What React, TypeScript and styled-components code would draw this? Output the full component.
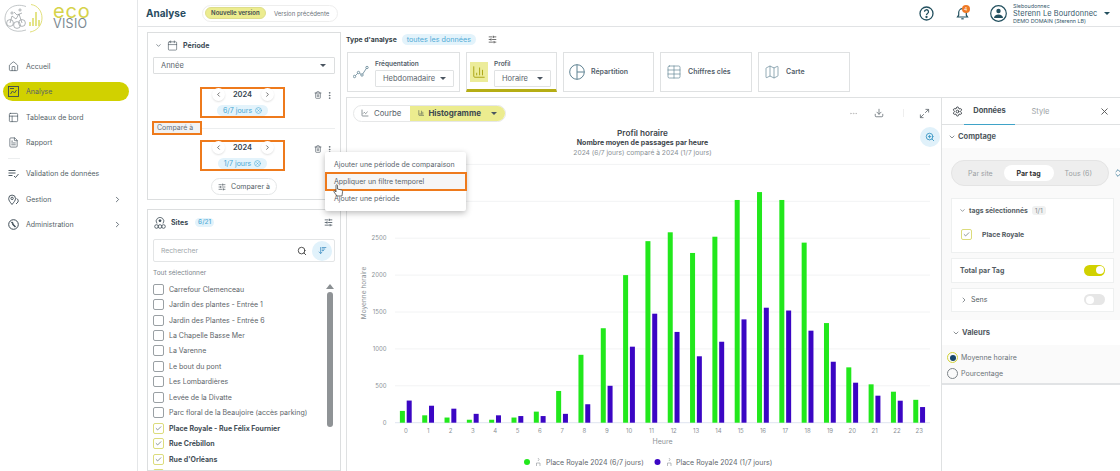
import React from "react";
import styled, { createGlobalStyle } from "styled-components";
import {
  Home, PanelsTopLeft, FileText, ChevronRight, ChevronLeft, ChevronDown,
  Trash2, EllipsisVertical, CircleX, SlidersHorizontal, Search, ArrowDownWideNarrow,
  Check, ChartLine, ChartColumn, Ellipsis, Download, Maximize2, Settings, X, ChevronsUpDown, Table, Map as MapIcon, ZoomIn, Calendar,
} from "lucide-react";

const Global = createGlobalStyle`
  html, body { margin: 0; padding: 0; background: #fff; overflow: hidden; }
  body { font-family: "Inter", "Noto Sans", sans-serif; color: #4a5560; }
  #root { width: 1120px; height: 471px; }
  * { box-sizing: border-box; }
`;

const Page = styled.div`
  display: flex; width: 1120px; height: 471px; overflow: hidden;
`;
const Sidebar = styled.aside`
  width: 138px; flex: none; border-right: 1px solid #e4e6e8; display: flex; flex-direction: column; padding: 3px 0 0 3px;
`;
const Logo = styled.div`
  display: flex; align-items: center; height: 31px; gap: 5px; margin-bottom: 22.5px; margin-left: -1px;
`;
const LogoWords = styled.div`
  display: flex; flex-direction: column; margin-top: -4px;
`;
const LogoEco = styled.span`
  color: #d6d34a; font-size: 20px; letter-spacing: .8px; line-height: 13px; font-weight: 400;
`;
const LogoVisio = styled.span`
  color: #7d8a92; font-size: 12.5px; letter-spacing: .3px; line-height: 11px;
`;
const NavItem = styled.div<{ $active?: boolean; $mb?: number }>`
  display: flex; align-items: center; width: 126px; height: 19px; padding: 0 7px 0 5px; gap: 7px; border-radius: 10px;
  font-size: 7px; color: #555f68; margin-bottom: ${p => p.$mb ?? 6.5}px;
  background: ${p => (p.$active ? "#d1d100" : "transparent")};
  svg { flex: none; color: #3c4a54; }
  span { flex: 1; }
`;
const NavDivider = styled.div`
  width: 12px; height: 1px; background: #eceeef; margin: 0 0 5.5px 5px;
`;
const Main = styled.div`
  flex: 1; min-width: 0; display: flex; flex-direction: column;
`;
const Header = styled.header`
  height: 27px; flex: none; border-bottom: 1px solid #e1e3e5; display: flex; align-items: center; padding: 0 0 0 8px;
`;
const Title = styled.h1`
  margin: 0 16px 0 0; font-size: 10px; font-weight: 700; color: #274b60;
`;
const VersionSwitch = styled.div`
  display: flex; align-items: center; height: 17px; width: 136px; border: 1px solid #eeeeee; border-radius: 9px; padding: 0 1px 0 2px;
`;
const VersionOn = styled.span`
  background: #ecec8f; border: 1px solid #dede8a; border-radius: 6px; width: 61px; text-align: center; font-size: 6px; font-weight: 600; color: #3d4a50; line-height: 10px;
`;
const VersionOff = styled.span`
  padding: 0 0 0 8px; font-size: 6px; color: #6d757b; white-space: nowrap;
`;
const HeaderRight = styled.div`
  margin-left: auto; display: flex; align-items: center; color: #23505f;
`;
const BellWrap = styled.div`
  position: relative; margin: 0 21px 0 22px; display: flex;
`;
const BellDot = styled.i`
  position: absolute; right: -1px; top: -2px; width: 8px; height: 8px; border-radius: 50%; background: #ef7a26; color: #fff; font-style: normal; font-size: 5px; line-height: 8px; text-align: center;
`;
const User = styled.div`
  display: flex; flex-direction: column; margin-left: 6.5px; width: 91px; color: #35586b;
`;
const UserSmall = styled.span`
  font-size: 5.4px; line-height: 6px; white-space: nowrap;
`;
const UserName = styled.span`
  font-size: 7.4px; line-height: 9px; letter-spacing: .1px; white-space: nowrap;
`;
const Caret = styled.i<{ $c?: string }>`
  display: inline-block; width: 0; height: 0; flex: none; border-left: 3px solid transparent; border-right: 3px solid transparent; border-top: 3px solid ${p => p.$c || "#4a5560"};
`;
const HeaderCaret = styled.div`
  width: 16px; display: flex;
`;
const Body = styled.div`
  flex: 1; min-height: 0; display: flex;
`;
const LeftCol = styled.div`
  width: 208px; flex: none; display: flex; flex-direction: column; gap: 9px; padding: 5px 0 0 9px; overflow: hidden;
`;
const Panel = styled.section`
  width: 194px; border: 1px solid #dcdedf; flex: none;
`;
const PeriodPanel = styled(Panel)`
  height: 168px; padding: 5px 5px 0 5px; display: flex; flex-direction: column;
`;
const SectionHead = styled.div`
  display: flex; align-items: center; gap: 5px; height: 14px; padding-left: 2px; font-size: 7px; font-weight: 700; color: #3c4a54;
`;
const Select = styled.div`
  display: flex; align-items: center; justify-content: space-between; height: 17px; border: 1px solid #dcdedf; border-radius: 1px; margin-top: 5px; padding: 0 8px 0 7px; font-size: 7.5px; color: #59636b;
`;
const PeriodRow = styled.div`
  position: relative; display: flex; justify-content: center; padding-right: 3px;
`;
const PeriodBox = styled.div<{ $mt: number }>`
  width: 85px; height: 31px; margin-top: ${p => p.$mt}px; border: 2px solid #ee7a1c; display: flex; flex-direction: column; align-items: center;
`;
const YearRow = styled.div`
  display: flex; align-items: center; justify-content: center; gap: 7px; font-size: 7.5px; font-weight: 600; color: #374550; height: 11px;
`;
const RoundBtn = styled.span`
  width: 13px; height: 13px; border-radius: 50%; background: #fff; box-shadow: 0 1px 2px rgba(0,0,0,.12); display: flex; align-items: center; justify-content: center; color: #444;
`;
const YearLabel = styled.span`
  width: 22px; text-align: center;
`;
const DaysChip = styled.div`
  margin-top: 4.5px; background: #e3f3fb; color: #46a7d4; border-radius: 6px; font-size: 7px; padding: 0 6px; height: 11px; display: flex; align-items: center; gap: 3px; white-space: nowrap;
`;
const PeriodActions = styled.div<{ $top: number }>`
  position: absolute; right: 1px; top: ${p => p.$top}px; display: flex; align-items: center; gap: 3px; color: #555f68;
`;
const CompareLine = styled.div`
  position: relative; height: 14px; margin-top: 3px; display: flex; align-items: center;
  &::before { content: ""; position: absolute; left: 0; right: 0; top: 7px; height: 1px; background: #eceeef; }
`;
const CompareTag = styled.span`
  position: relative; margin-left: -1px; border: 2px solid #ee7a1c; background: #f1f2f3; color: #65707a; font-size: 7px; padding-left: 3px; height: 14px; line-height: 10px; width: 50px; white-space: nowrap;
`;
const CompareBtn = styled.div`
  align-self: center; margin-top: 7px; display: flex; align-items: center; justify-content: center; gap: 5px; height: 17px; width: 66px; border: 1px solid #e5e7e8; border-radius: 9px; font-size: 7px; color: #525c64; white-space: nowrap;
`;
const SitesPanel = styled(Panel)`
  height: 262px; padding: 4px 5px 0 5px; overflow: hidden;
`;
const SitesHead = styled.div`
  display: flex; align-items: center; height: 17px; font-size: 7px; font-weight: 700; color: #3c4a54; padding-left: 1px; gap: 5px;
`;
const Count = styled.span`
  background: #e3f3fb; color: #54aed8; font-size: 6.5px; font-weight: 500; border-radius: 5px; padding: 0 3px; line-height: 9px; margin-left: 2px;
`;
const HeadEnd = styled.div`
  margin-left: auto; display: flex; margin-right: 2px;
`;
const SearchBox = styled.div`
  height: 23px; margin-top: 8px; border: 1px solid #e3e5e6; border-radius: 2px; display: flex; align-items: center; padding: 0 2px 0 7px; font-size: 6.8px; color: #a0a6aa;
  span { flex: 1; }
`;
const SortBtn = styled.div`
  width: 20px; height: 20px; border-radius: 50%; background: #e1f2fb; color: #3c8cc0; display: flex; align-items: center; justify-content: center; margin-left: 5px;
`;
const SelectAll = styled.div`
  margin-top: 6px; font-size: 6.5px; color: #7d858b; height: 10px; line-height: 10px;
`;
const ListWrap = styled.div`
  display: flex; position: relative; margin-top: 5.5px;
`;
const List = styled.div`
  flex: 1; display: flex; flex-direction: column; gap: 4px;
`;
const SiteRow = styled.div<{ $on?: boolean }>`
  display: flex; align-items: center; gap: 5px; height: 11.45px; font-size: 7px; white-space: nowrap;
  font-weight: ${p => (p.$on ? 700 : 400)}; color: ${p => (p.$on ? "#454f57" : "#5c6469")};
`;
const Box = styled.span<{ $on?: boolean }>`
  width: 11px; height: 11px; flex: none; border-radius: 2px; border: 1px solid ${p => (p.$on ? "#dcdc7c" : "#9aa0a4")}; display: flex; align-items: center; justify-content: center; color: #3d4a50;
`;
const ScrollTrack = styled.div`
  position: absolute; right: 2px; top: 0; width: 6px; display: flex; flex-direction: column; align-items: center; gap: 3px;
`;
const ScrollUp = styled.i`
  flex: none; width: 0; height: 0; border-left: 4px solid transparent; border-right: 4px solid transparent; border-bottom: 5px solid #8a8f92;
`;
const ScrollThumb = styled.div`
  width: 6px; height: 135px; border-radius: 3px; background: #8f9396;
`;
const Center = styled.div`
  flex: 1; min-width: 0; display: flex; flex-direction: column; padding: 5px 0 0 0; position: relative;
`;
const TypeRow = styled.div`
  display: flex; align-items: center; height: 14px; font-size: 6.8px; font-weight: 700; color: #333d45;
`;
const TypeChip = styled.span`
  background: #e3f3fb; color: #4faad6; font-weight: 400; font-size: 7.2px; border-radius: 6px; padding: 0 5px; line-height: 11px; margin: 0 12px 0 5px;
`;
const Cards = styled.div`
  display: flex; gap: 6px; padding: 6px 0 0 1px; height: 51px; flex: none;
`;
const Card = styled.div<{ $w: number; $active?: boolean }>`
  width: ${p => p.$w}px; height: 40px; border: 1px solid #dfe1e2; display: flex; align-items: center; padding: 0 5px 1px; gap: 6px; font-size: 7px; font-weight: 600; color: #53606a; white-space: nowrap;
  ${p => (p.$active ? "border-bottom: 3px solid #b5ad14; padding-left: 3px; padding-top: 2px; padding-bottom: 0;" : "")}
  svg { flex: none; color: #5f8292; }
`;
const CardCol = styled.div`
  display: flex; flex-direction: column; gap: 2px; font-size: 6.5px; padding-top: 3px;
`;
const MiniSelect = styled.div<{ $w: number }>`
  width: ${p => p.$w}px; height: 17px; border: 1px solid #e0e2e3; border-radius: 1px; display: flex; align-items: center; justify-content: space-between; padding: 0 7px; font-size: 7.5px; font-weight: 400; color: #59636b;
`;
const ProfileIcon = styled.div`
  width: 19px; height: 20px; background: #ecec9a; display: flex; align-items: center; justify-content: center; svg { color: #a9a310; }
`;
const Split = styled.div`
  flex: 1; min-height: 0; display: flex; border-top: 1px solid #dfe1e2;
`;
const ChartArea = styled.div`
  width: 596px; flex: none; border-left: 1px solid #dfe1e2; border-right: 1px solid #dfe1e2; position: relative; display: flex; flex-direction: column;
`;
const ChartTop = styled.div`
  display: flex; align-items: center; height: 30px; padding: 0 11px 0 6px; flex: none; color: #666f76;
`;
const ChartTabs = styled.div`
  display: flex; height: 17px; border: 1px solid #e6e7e8; border-radius: 9px; overflow: hidden;
`;
const CurveTab = styled.div`
  display: flex; align-items: center; gap: 5px; width: 56px; padding-left: 7px; font-size: 7.8px; color: #59636b;
`;
const HistoTab = styled.div`
  display: flex; align-items: center; gap: 4px; width: 95px; padding: 0 8px; font-size: 8px; font-weight: 700; color: #3e4a50; background: #ecec8f;
`;
const TopEnd = styled.div`
  margin-left: auto; display: flex; align-items: center; gap: 16px;
  svg { color: #6e767c; }
`;
const TopDivider = styled.span`
  width: 1px; height: 8px; background: #eeeeee; margin: 0 -1px 0 3px;
`;
const ChartTitles = styled.div`
  text-align: center; flex: none; padding-right: 3px;
`;
const ChartH = styled.div`
  font-size: 8.2px; font-weight: 600; color: #3e464c; line-height: 10px;
`;
const ChartS = styled.div`
  font-size: 7px; font-weight: 700; color: #3e464c; line-height: 9px;
`;
const ChartP = styled.div`
  font-size: 6.7px; color: #8a9196; line-height: 12px;
`;
const ZoomBtn = styled.div`
  position: absolute; right: 1px; top: 29px; width: 20px; height: 20px; border-radius: 50%; background: #e0f1fa; display: flex; align-items: center; justify-content: center; color: #3c97c4;
`;
const ChartSvg = styled.svg`
  position: absolute; left: 0; top: 0; pointer-events: none;
`;
const Right = styled.aside`
  flex: 1; min-width: 0; display: flex; flex-direction: column; overflow: hidden;
`;
const Tabs = styled.div`
  display: flex; align-items: center; height: 27px; border-bottom: 1px solid #dfe1e2; padding-left: 10px; flex: none; color: #3b4248;
`;
const Tab = styled.div<{ $on?: boolean }>`
  height: 27px; display: flex; align-items: center; justify-content: center; width: 51px; font-size: 7.5px; font-weight: ${p => (p.$on ? 700 : 400)}; color: ${p => (p.$on ? "#454d54" : "#9aa0a4")};
  border-bottom: ${p => (p.$on ? "1px solid #3fa3c8" : "0")}; margin-left: ${p => (p.$on ? 1 : 0)}px;
`;
const TabX = styled.div`
  margin-left: auto; margin-right: 10px; display: flex; color: #555;
`;
const Accordion = styled.div<{ $white?: boolean }>`
  display: flex; align-items: center; gap: 2px; height: ${p => (p.$white ? 25 : 23)}px; padding-left: ${p => (p.$white ? 10 : 6)}px; font-size: 7.5px; font-weight: 700; color: #51595f; flex: none;
`;
const Gray = styled.div`
  background: #fafafa; flex: none; padding: 12px 5px 8px 9px;
`;
const Segment = styled.div`
  display: flex; align-items: center; width: 158px; height: 26px; flex: none; border-radius: 13px; background: #eeeeee; border: 1px solid #e4e4e4; padding: 0 16px 0 16px; font-size: 7px; color: #9a9fa3;
  justify-content: space-between; white-space: nowrap;
`;
const SegmentOn = styled.span`
  background: #fff; border-radius: 8px; width: 50px; height: 16px; display: flex; align-items: center; justify-content: center; font-weight: 700; color: #333;
`;
const SegmentWrap = styled.div`
  display: flex; align-items: center; gap: 4px; color: #3f7c9a;
  svg { flex: none; }
`;
const WhiteCard = styled.div`
  background: #fff; border: 1px solid #eef0f0; width: 163px;
`;
const TagsCard = styled(WhiteCard)`
  height: 55px; margin-top: 12px; padding: 7px 7px;
`;
const TagsHead = styled.div`
  display: flex; align-items: center; gap: 3px; font-size: 6.8px; font-weight: 700; color: #555d63; height: 8px; white-space: nowrap;
`;
const Muted = styled.span`
  background: #f0f1f1; color: #8a9196; font-weight: 400; border-radius: 3px; padding: 0 3px; margin-left: 1px;
`;
const TagRow = styled.div`
  display: flex; align-items: center; gap: 10px; margin-top: 15px; margin-left: 2px; font-size: 6.8px; font-weight: 700; color: #50585e;
`;
const RowCard = styled(WhiteCard)<{ $h: number; $mt: number; $bold?: boolean }>`
  height: ${p => p.$h}px; margin-top: ${p => p.$mt}px; display: flex; align-items: center; padding: 0 8px 1px 8px; font-size: 7px; color: #555d63; font-weight: ${p => (p.$bold ? 700 : 400)};
  span { flex: 1; }
`;
const Toggle = styled.div<{ $on?: boolean }>`
  width: 21px; height: 11px; border-radius: 6px; background: ${p => (p.$on ? "#d1d100" : "#e6e6e6")}; position: relative;
  &::after { content: ""; position: absolute; top: 1.5px; width: 8px; height: 8px; border-radius: 50%; background: #fff; ${p => (p.$on ? "right: 1.5px;" : "left: 1.5px;")} }
`;
const Radios = styled.div`
  background: #fafafa; border-bottom: 2px solid #e1e3e5; padding: 7px 0 4px 5px; display: flex; flex-direction: column; gap: 5px;
`;
const Radio = styled.div`
  display: flex; align-items: center; gap: 3px; font-size: 7px; color: #6a7278;
`;
const RadioDot = styled.i<{ $on?: boolean }>`
  width: 11px; height: 11px; border-radius: 50%; border: 1px solid ${p => (p.$on ? "#d3d338" : "#7d8488")}; display: flex; align-items: center; justify-content: center;
  &::after { content: ""; width: 6px; height: 6px; border-radius: 50%; background: ${p => (p.$on ? "#17466b" : "transparent")}; }
`;
const Menu = styled.div`
  position: absolute; left: -21px; top: 125px; width: 141px; height: 59px; background: #fff; border-radius: 2px; box-shadow: 0 2px 6px rgba(0,0,0,.28); padding-top: 5px; font-size: 7px; color: #5a646c; z-index: 5; display: flex; flex-direction: column;
`;
const MenuItem = styled.div<{ $on?: boolean }>`
  height: 17px; line-height: 16px; padding-left: 9px; white-space: nowrap; flex: none;
  ${p => (p.$on ? "height: 19px; margin-top: -2px; border: 2px solid #ee7a1c; background: #f6f6f6; padding-left: 7px; margin-right: -1px; line-height: 15px;" : "")}
`;
const Cursor = styled.svg`
  position: absolute; left: 8px; top: 32px;
`;

const sites = ["Carrefour Clemenceau", "Jardin des plantes - Entrée 1", "Jardin des Plantes - Entrée 6", "La Chapelle Basse Mer", "La Varenne", "Le bout du pont", "Les Lombardières", "Levée de la Divatte", "Parc floral de la Beaujoire (accès parking)", "Place Royale - Rue Félix Fournier", "Rue Crébillon", "Rue d'Orléans", ""];
const green = [160,100,70,40,40,70,150,430,920,1280,2000,2460,2580,2300,2520,3018,3125,3018,2440,1350,750,520,420,310];
const purple = [300,230,190,120,100,90,90,120,250,500,1030,1477,1230,900,1097,1400,1558,1520,1247,826,542,366,298,212];

const ox = 347;
const oy = 98;
function Chart() {
  const y0 = 422.7 - oy, k = 36.9 / 500;
  const cx = (i: number) => 405.9 + i * 22.32 - ox;
  const font = "Inter, sans-serif";
  return (
    <ChartSvg width={594} height={373} viewBox="0 0 594 373">
      {[500,1000,1500,2000,2500,3000,3500].map(v => (
        <line key={v} x1={395 - ox} x2={930 - ox} y1={y0 - v * k} y2={y0 - v * k} stroke="#f2f3f4" />
      ))}
      <line x1={395 - ox} x2={930 - ox} y1={y0} y2={y0} stroke="#dfe4f0" />
      {[0,500,1000,1500,2000,2500].map(v => (
        <text key={v} x={386.5 - ox} y={y0 - v * k + 2.2} textAnchor="end" fontSize="6" fill="#8b9196" fontFamily={font}>{v}</text>
      ))}
      {green.map((v, i) => (
        <g key={i}>
          <rect x={cx(i) - 6} y={y0 - v * k} width={5} height={v * k} fill="#22e81c" />
          <rect x={cx(i) + 0.8} y={y0 - purple[i] * k} width={5} height={purple[i] * k} fill="#3b06c4" />
          <text x={cx(i)} y={y0 + 10} textAnchor="middle" fontSize="6" fill="#8b9196" fontFamily={font}>{i}</text>
        </g>
      ))}
      <text transform={`translate(${366 - ox} ${293 - oy}) rotate(-90)`} textAnchor="middle" fontSize="6.6" fill="#8b9196" fontFamily={font}>Moyenne horaire</text>
      <text x={662.5 - ox} y={444 - oy} textAnchor="middle" fontSize="7" fill="#8b9196" fontFamily={font}>Heure</text>
      <circle cx={527 - ox} cy={462 - oy} r={3} fill="#22e81c" />
      <g stroke="#8b9196" strokeWidth=".6" fill="none">
        <path d={`M${538 - ox} ${458 - oy}l1 1.5-1 1.5M${536.5 - ox} ${466 - oy}v-3h3.5v3`} />
      </g>
      <text x={546 - ox} y={464.5 - oy} fontSize="7" fill="#5f676d" fontFamily={font}>Place Royale 2024 (6/7 jours)</text>
      <circle cx={657.5 - ox} cy={462 - oy} r={3} fill="#3b06c4" />
      <g stroke="#8b9196" strokeWidth=".6" fill="none">
        <path d={`M${669 - ox} ${458 - oy}l1 1.5-1 1.5M${667.5 - ox} ${466 - oy}v-3h3.5v3`} />
      </g>
      <text x={676 - ox} y={464.5 - oy} fontSize="7" fill="#5f676d" fontFamily={font}>Place Royale 2024 (1/7 jours)</text>
    </ChartSvg>
  );
}

function LogoMark() {
  return (
    <svg width="46" height="31" viewBox="0 0 46 31" fill="none">
      <path d="M24 3.5C12 -0.5 3 6 3 16c0 9 9 15 21 11" stroke="#a8adb0" strokeWidth=".7" />
      <path d="M29 1.5c7 1 11 7 11 13.5 0 7-5 13-12 14" stroke="#d9d75a" strokeWidth=".8" />
      <g stroke="#8f9599" strokeWidth=".7">
        <circle cx="8" cy="20" r="3.4" /><circle cx="15" cy="22" r="3.4" /><circle cx="20" cy="20" r="3.4" />
        <path d="M8 20l2-7 4 3 3-5 3 9M12 9l3 3 5-2" />
        <circle cx="10" cy="10" r="1.1" /><circle cx="18" cy="7" r="1.1" />
      </g>
      <g stroke="#dcdb62" strokeWidth="1.5">
        <path d="M28 23v-4M31 23v-8M34 23V9M37 23v-6" />
      </g>
    </svg>
  );
}
function AnalysisIcon() {
  return (
    <svg width="11" height="11" viewBox="0 0 11 11" fill="none" stroke="#3c4a54" strokeWidth=".9">
      <rect x=".5" y=".5" width="10" height="10" /><path d="M2.5 8l2-3 2 2 2-3M2 2.5h4" />
    </svg>
  );
}
function ValidationIcon() {
  return (
    <svg width="11" height="11" viewBox="0 0 11 11" fill="none" stroke="#3c4a54" strokeWidth=".9">
      <path d="M.5 2.5h7M.5 5h7M.5 7.5h4M6 8l1.5 1.5L10.5 6" />
    </svg>
  );
}
function PinIcon() {
  return (
    <svg width="11" height="11" viewBox="0 0 11 11" fill="none" stroke="#3c4a54" strokeWidth=".9">
      <path d="M4 10.5C2 8 .7 6.5 .7 4.5a3.4 3.4 0 0 1 6.8 0C7.5 6.5 6 8 4 10.5z" /><circle cx="4.1" cy="4.4" r="1.2" /><path d="M8.5 4.5c1.5.5 2 2 1.5 3.5L8 10" />
    </svg>
  );
}
function AdminIcon() {
  return (
    <svg width="11" height="11" viewBox="0 0 11 11" fill="none" stroke="#3c4a54" strokeWidth="1">
      <circle cx="5.5" cy="5.5" r="4.8" /><path d="M3.5 3l1.8 1.8M4.5 5l3 3" strokeWidth="1.5" />
    </svg>
  );
}
function SitesIcon() {
  return (
    <svg width="12" height="12" viewBox="0 0 12 12" fill="none" stroke="#3c4a54" strokeWidth=".8">
      <circle cx="2.5" cy="9.5" r="1.8" /><circle cx="6" cy="9.5" r="1.8" /><circle cx="9.5" cy="9.5" r="1.8" />
      <path d="M3 6.5a3.8 3.8 0 1 1 6 0" /><circle cx="6" cy="3.7" r="1" fill="#3c4a54" />
    </svg>
  );
}
function TrendIcon() {
  return (
    <svg width="16" height="14" viewBox="0 0 16 14" fill="none" stroke="#5f8292" strokeWidth=".8">
      <circle cx="1.5" cy="11.5" r="1.2" /><circle cx="5.5" cy="7.5" r="1.2" /><circle cx="9" cy="10" r="1.2" /><circle cx="14" cy="2.5" r="1.2" />
      <path d="M2.4 10.7l2.3-2.4M6.5 8.2l1.5 1.1M9.7 9l3.6-5.5" />
    </svg>
  );
}
function PieIcon() {
  return (
    <svg width="16" height="16" viewBox="0 0 16 16" fill="none" stroke="#5f8292" strokeWidth="1">
      <circle cx="8" cy="8" r="7.3" /><path d="M8 .7V15.3M8 8h7.3" />
    </svg>
  );
}
function HelpIcon() {
  return (
    <svg width="15" height="15" viewBox="0 0 15 15" fill="none" stroke="#23505f" strokeWidth="1.3">
      <circle cx="7.5" cy="7.5" r="6.5" /><path d="M5.5 5.8a2 2 0 1 1 3 1.7c-.6.4-1 .8-1 1.5" /><circle cx="7.5" cy="11" r=".5" fill="#23505f" />
    </svg>
  );
}
function BellIcon() {
  return (
    <svg width="13" height="13" viewBox="0 0 13 13" fill="none" stroke="#23505f" strokeWidth="1.2">
      <path d="M1.5 10h10l-1.2-1.8V5.5a3.8 3.8 0 0 0-7.6 0v2.7z" /><path d="M5.3 11.8h2.4" />
    </svg>
  );
}
function AvatarIcon() {
  return (
    <svg width="17" height="17" viewBox="0 0 17 17" fill="none" stroke="#23505f" strokeWidth="1.2">
      <circle cx="8.5" cy="8.5" r="7.8" /><circle cx="8.5" cy="6" r="2.2" fill="#23505f" stroke="none" />
      <path d="M4 13c0-2.3 2-3.5 4.5-3.5S13 10.7 13 13z" fill="#23505f" stroke="none" />
    </svg>
  );
}

export default function App() {
  return (
    <Page>
      <Global />
      <Sidebar>
        <Logo>
          <LogoMark />
          <LogoWords><LogoEco>eco</LogoEco><LogoVisio>VISIO</LogoVisio></LogoWords>
        </Logo>
        <NavItem><Home size={11} strokeWidth={1.4} /><span>Accueil</span></NavItem>
        <NavItem $active><AnalysisIcon /><span>Analyse</span></NavItem>
        <NavItem><PanelsTopLeft size={11} strokeWidth={1.4} /><span>Tableaux de bord</span></NavItem>
        <NavItem $mb={5.5}><FileText size={11} strokeWidth={1.4} /><span>Rapport</span></NavItem>
        <NavDivider />
        <NavItem><ValidationIcon /><span>Validation de données</span></NavItem>
        <NavItem><PinIcon /><span>Gestion</span><ChevronRight size={9} /></NavItem>
        <NavItem><AdminIcon /><span>Administration</span><ChevronRight size={9} /></NavItem>
      </Sidebar>
      <Main>
        <Header>
          <Title>Analyse</Title>
          <VersionSwitch><VersionOn>Nouvelle version</VersionOn><VersionOff>Version précédente</VersionOff></VersionSwitch>
          <HeaderRight>
            <HelpIcon />
            <BellWrap><BellIcon /><BellDot>4</BellDot></BellWrap>
            <AvatarIcon />
            <User>
              <UserSmall>Sleboudonnec</UserSmall>
              <UserName>Sterenn Le Bourdonnec</UserName>
              <UserSmall>DEMO DOMAIN (Sterenn LB)</UserSmall>
            </User>
            <HeaderCaret><Caret $c="#23505f" /></HeaderCaret>
          </HeaderRight>
        </Header>
        <Body>
          <LeftCol>
            <PeriodPanel>
              <SectionHead><ChevronDown size={7} /><Calendar size={11} strokeWidth={1.3} />Période</SectionHead>
              <Select>Année<Caret /></Select>
              <PeriodRow>
                <PeriodBox $mt={13}>
                  <YearRow><RoundBtn><ChevronLeft size={7} strokeWidth={2.5} /></RoundBtn><YearLabel>2024</YearLabel><RoundBtn><ChevronRight size={7} strokeWidth={2.5} /></RoundBtn></YearRow>
                  <DaysChip>6/7 jours<CircleX size={7} /></DaysChip>
                </PeriodBox>
                <PeriodActions $top={16.5}><Trash2 size={8} /><EllipsisVertical size={9} /></PeriodActions>
              </PeriodRow>
              <CompareLine><CompareTag>Comparé à</CompareTag></CompareLine>
              <PeriodRow>
                <PeriodBox $mt={5}>
                  <YearRow><RoundBtn><ChevronLeft size={7} strokeWidth={2.5} /></RoundBtn><YearLabel>2024</YearLabel><RoundBtn><ChevronRight size={7} strokeWidth={2.5} /></RoundBtn></YearRow>
                  <DaysChip>1/7 jours<CircleX size={7} /></DaysChip>
                </PeriodBox>
                <PeriodActions $top={9.5}><Trash2 size={8} /><EllipsisVertical size={9} /></PeriodActions>
              </PeriodRow>
              <CompareBtn><SlidersHorizontal size={8} />Comparer à</CompareBtn>
            </PeriodPanel>
            <SitesPanel>
              <SitesHead>
                <SitesIcon />Sites<Count>6/21</Count>
                <HeadEnd><SlidersHorizontal size={9} /></HeadEnd>
              </SitesHead>
              <SearchBox><span>Rechercher</span><Search size={10} color="#333" /><SortBtn><ArrowDownWideNarrow size={9} /></SortBtn></SearchBox>
              <SelectAll>Tout sélectionner</SelectAll>
              <ListWrap>
                <List>
                  {sites.map((s, i) => (
                    <SiteRow key={s || i} $on={i >= 9}>
                      <Box $on={i >= 9}>{i >= 9 && <Check size={7} />}</Box>{s}
                    </SiteRow>
                  ))}
                </List>
                <ScrollTrack><ScrollUp /><ScrollThumb /></ScrollTrack>
              </ListWrap>
            </SitesPanel>
          </LeftCol>
          <Center>
            <TypeRow>Type d'analyse<TypeChip>toutes les données</TypeChip><SlidersHorizontal size={9} color="#444" /></TypeRow>
            <Cards>
              <Card $w={113}><TrendIcon /><CardCol>Fréquentation<MiniSelect $w={79}>Hebdomadaire<Caret /></MiniSelect></CardCol></Card>
              <Card $w={91} $active><ProfileIcon><ChartColumn size={14} strokeWidth={1.6} /></ProfileIcon><CardCol>Profil<MiniSelect $w={57}>Horaire<Caret /></MiniSelect></CardCol></Card>
              <Card $w={91}><PieIcon />Répartition</Card>
              <Card $w={92}><Table size={16} strokeWidth={1} />Chiffres clés</Card>
              <Card $w={92}><MapIcon size={16} strokeWidth={1} />Carte</Card>
            </Cards>
            <Split>
              <ChartArea>
                <Chart />
                <ChartTop>
                  <ChartTabs>
                    <CurveTab><ChartLine size={8} />Courbe</CurveTab>
                    <HistoTab><ChartColumn size={8} />Histogramme<Caret style={{ marginLeft: 6 }} /></HistoTab>
                  </ChartTabs>
                  <TopEnd><Ellipsis size={9} color="#bbb" /><Download size={10} /><TopDivider /><Maximize2 size={11} /></TopEnd>
                </ChartTop>
                <ChartTitles>
                  <ChartH>Profil horaire</ChartH>
                  <ChartS>Nombre moyen de passages par heure</ChartS>
                  <ChartP>2024 (6/7 jours) comparé à 2024 (1/7 jours)</ChartP>
                </ChartTitles>
                <ZoomBtn><ZoomIn size={10} strokeWidth={2.2} /></ZoomBtn>
              </ChartArea>
              <Right>
                <Tabs>
                  <Settings size={11} />
                  <Tab $on>Données</Tab>
                  <Tab>Style</Tab>
                  <TabX><X size={11} /></TabX>
                </Tabs>
                <Accordion><ChevronDown size={8} />Comptage</Accordion>
                <Gray>
                  <SegmentWrap>
                    <Segment>Par site<SegmentOn>Par tag</SegmentOn>Tous (6)</Segment>
                    <ChevronsUpDown size={10} />
                  </SegmentWrap>
                  <TagsCard>
                    <TagsHead><ChevronDown size={7} />tags sélectionnés<Muted>1/1</Muted></TagsHead>
                    <TagRow><Box $on><Check size={7} /></Box>Place Royale</TagRow>
                  </TagsCard>
                  <RowCard $h={25} $mt={5} $bold><span>Total par Tag</span><Toggle $on /></RowCard>
                  <RowCard $h={24} $mt={5}><ChevronRight size={8} style={{ marginRight: 3 }} /><span>Sens</span><Toggle /></RowCard>
                </Gray>
                <Accordion $white><ChevronDown size={8} />Valeurs</Accordion>
                <Radios>
                  <Radio><RadioDot $on />Moyenne horaire</Radio>
                  <Radio><RadioDot />Pourcentage</Radio>
                </Radios>
              </Right>
            </Split>
            <Menu>
              <MenuItem>Ajouter une période de comparaison</MenuItem>
              <MenuItem $on>Appliquer un filtre temporel</MenuItem>
              <MenuItem>Ajouter une période</MenuItem>
              <Cursor width="11" height="13" viewBox="0 0 11 13" fill="#fff" stroke="#333" strokeWidth=".7"><path d="M3 1.5c0-1 1.5-1 1.5 0V5l4 1c1 .3 1.2 1 1 2L9 12H4L1 8c-.5-1 .5-1.7 1.2-1L3 8z" /></Cursor>
            </Menu>
          </Center>
        </Body>
      </Main>
    </Page>
  );
}
